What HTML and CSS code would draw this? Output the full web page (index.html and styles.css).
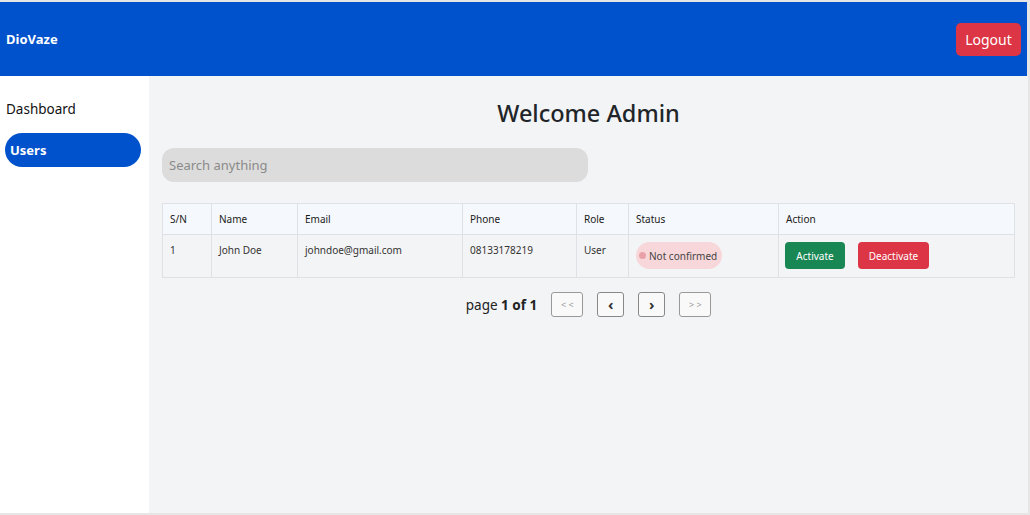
FILE: index.html
```html
<!DOCTYPE html>
<html>
<head>
<meta charset="utf-8">
<link rel="stylesheet" href="styles.css">
</head>
<body>
<div class="app">
  <header class="topbar">
    <div class="brand">DioVaze</div>
    <button class="logout">Logout</button>
  </header>
  <div class="body">
    <aside class="sidebar">
      <div class="nav-item">Dashboard</div>
      <div class="nav-item active">Users</div>
    </aside>
    <main class="main">
      <h1 class="title">Welcome Admin</h1>
      <div class="search">Search anything</div>
      <table class="users">
        <colgroup>
          <col style="width:49px"><col style="width:86px"><col style="width:165px"><col style="width:114px"><col style="width:52px"><col style="width:150px"><col style="width:236px">
        </colgroup>
        <thead>
          <tr><th>S/N</th><th>Name</th><th>Email</th><th>Phone</th><th>Role</th><th>Status</th><th>Action</th></tr>
        </thead>
        <tbody>
          <tr>
            <td>1</td><td>John Doe</td><td>johndoe@gmail.com</td><td>08133178219</td><td>User</td>
            <td><span class="badge"><span class="dot"></span>Not confirmed</span></td>
            <td><div class="actions"><button class="btn green">Activate</button><button class="btn red">Deactivate</button></div></td>
          </tr>
        </tbody>
      </table>
      <div class="pager">
        <span class="page-label">page <b>1 of 1</b></span>
        <button class="pbtn wide dim">&lt; &lt;</button>
        <button class="pbtn">&lsaquo;</button>
        <button class="pbtn">&rsaquo;</button>
        <button class="pbtn wide dim">&gt; &gt;</button>
      </div>
    </main>
  </div>
</div>
</body>
</html>
```

FILE: styles.css
```css
* { box-sizing: border-box; }
html, body { margin: 0; padding: 0; }
body {
  background: #e6e6e6;
  font-family: "Noto Sans", "Open Sans", sans-serif;
  color: #212529;
  width: 1030px;
  height: 515px;
  overflow: hidden;
}
.app {
  margin: 2px 3px 2px 0;
  height: 511px;
  display: flex;
  flex-direction: column;
  background: #fff;
}
.topbar {
  height: 74px;
  background: #0052cc;
  display: flex;
  align-items: center;
  justify-content: space-between;
  padding: 0 6px 0 6px;
  flex: none;
}
.brand { color: #fff; font-weight: 700; font-size: 13px; }
.logout {
  background: #dc3545;
  color: #fff;
  border: none;
  border-radius: 5px;
  font-family: inherit;
  font-size: 14px;
  width: 65px;
  height: 33px;
  padding: 0;
}
.body { flex: 1; display: flex; min-height: 0; }
.sidebar {
  width: 149px;
  flex: none;
  background: #fff;
  padding: 16px 8px 0 5px;
  display: flex;
  flex-direction: column;
  gap: 7px;
}
.nav-item {
  font-size: 13.5px;
  height: 34px;
  display: flex;
  align-items: center;
  padding-left: 1px;
  color: #111;
}
.nav-item.active {
  background: #0052cc;
  color: #fff;
  font-weight: 700;
  font-size: 13px;
  border-radius: 17px;
  padding-left: 5px;
}
.main {
  flex: 1;
  background: #f3f4f6;
  padding: 0 13px 0 13px;
}
.title {
  margin: 22px 0 0;
  text-align: center;
  font-size: 23.5px;
  font-weight: 500;
  line-height: 30px;
  color: #212529;
}
.search {
  margin-top: 20px;
  width: 426px;
  height: 34px;
  background: #dcdcdc;
  border-radius: 12px;
  color: #8a8a8a;
  font-size: 13px;
  display: flex;
  align-items: center;
  padding-left: 7px;
}
.users {
  margin-top: 21px;
  border-collapse: collapse;
  table-layout: fixed;
  width: 852px;
  font-size: 10px;
}
.users th, .users td {
  border: 1px solid #dee2e6;
  text-align: left;
  padding: 0 7px;
}
.users th {
  background: #f5f8fc;
  font-weight: 400;
  color: #1a1a1a;
  height: 31px;
}
.users td {
  height: 43px;
  vertical-align: top;
  padding-top: 8px;
  color: #333;
}
.badge {
  display: inline-flex;
  align-items: center;
  margin-top: -1px;
  height: 27px;
  padding: 0 5px 0 3px;
  background: #f8d7da;
  border-radius: 14px;
  color: #444;
  gap: 3px;
}
.dot { width: 7px; height: 7px; border-radius: 50%; background: #e8a1a9; }
.users td:last-child { padding-top: 7px; padding-left: 6px; }
.actions { display: flex; gap: 13px; }
.btn {
  height: 27px;
  border: none;
  border-radius: 4px;
  color: #fff;
  font-family: inherit;
  font-size: 10px;
  padding: 0;
}
.btn.green { background: #198754; width: 60px; }
.btn.red { background: #dc3545; width: 71px; }
.pager {
  margin-top: 14px;
  display: flex;
  align-items: center;
  justify-content: center;
}
.page-label { font-size: 13.5px; margin-right: 14px; color: #222; }
.pbtn {
  width: 27px;
  height: 25px;
  border: 1px solid #888;
  border-radius: 3px;
  background: #f9f9f9;
  font-family: inherit;
  font-size: 15px;
  font-weight: 700;
  color: #333;
  padding: 0;
  margin-right: 14px;
  line-height: 1;
}
.pbtn.wide { width: 32px; font-size: 9px; font-weight: 400; }
.pbtn.dim { color: #999; border-color: #999; }
.pbtn:last-child { margin-right: 0; }
```
